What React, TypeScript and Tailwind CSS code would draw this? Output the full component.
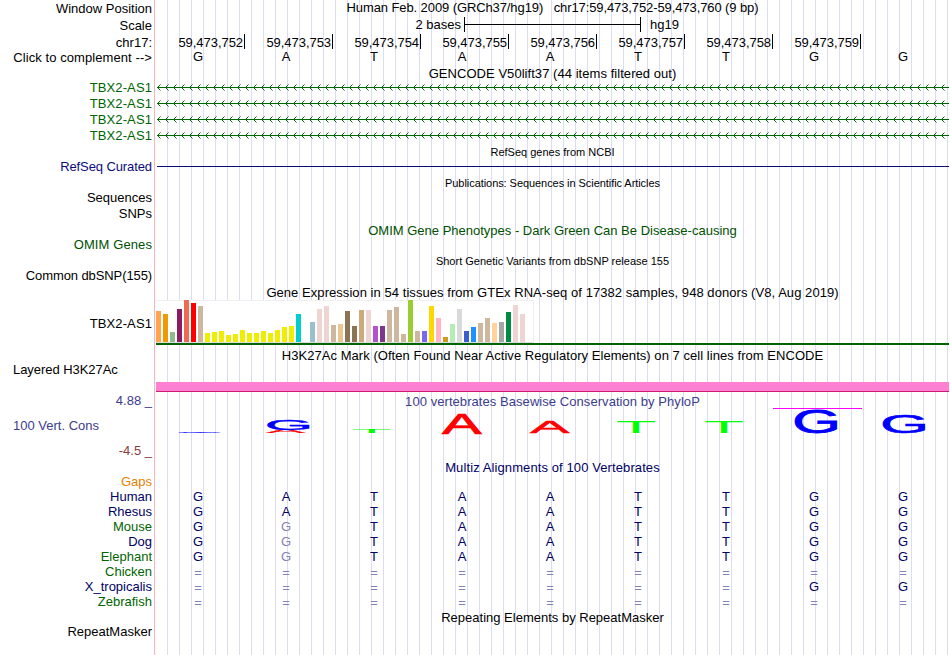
import React from 'react'
import clsx from 'clsx'

const GREEN = 'text-[#006400]'
const NAVY = 'text-[#000064]'

const labels = [
  { text: 'Window Position', cls: 'mt-px' },
  { text: 'Scale', cls: 'mt-0.5' },
  { text: 'chr17:', cls: 'mt-0.5' },
  { text: 'Click to complement -->', cls: 'tracking-[0.08px]' },
  { text: 'TBX2-AS1', cls: 'mt-[15px] text-[#006400] tracking-[0.1px]' },
  { text: 'TBX2-AS1', cls: 'mt-px text-[#006400] tracking-[0.1px]' },
  { text: 'TBX2-AS1', cls: 'mt-px text-[#006400] tracking-[0.1px]' },
  { text: 'TBX2-AS1', cls: 'mt-px text-[#006400] tracking-[0.1px]' },
  { text: 'RefSeq Curated', cls: 'mt-4 text-[#0c0c78] tracking-[-0.1px]' },
  { text: 'Sequences', cls: 'mt-4' },
  { text: 'SNPs', cls: 'mt-px' },
  { text: 'OMIM Genes', cls: 'mt-4 text-[#005000] tracking-[0.1px]' },
  { text: 'Common dbSNP(155)', cls: 'mt-4 tracking-[-0.1px]' },
  { text: 'TBX2-AS1', cls: 'mt-[33px] tracking-[0.1px]' },
  { text: 'Layered H3K27Ac', cls: 'mt-[31px] self-start ml-[13px] tracking-[-0.05px]' },
  { text: '4.88 _', cls: 'mt-4 text-[#3c3c8c]' },
  { text: '100 Vert. Cons', cls: 'mt-2.5 self-start ml-[13px] text-[#3c3c8c]' },
  { text: '-4.5 _', cls: 'mt-2.5 text-[#8c3c3c]' },
  { text: 'Gaps', cls: 'mt-4 text-[#e68200]' },
]

const species = [
  { name: 'Human', color: NAVY, seq: 'GATAATTGG' },
  { name: 'Rhesus', color: NAVY, seq: 'GATAATTGG' },
  { name: 'Mouse', color: GREEN, seq: 'GgTAATTGG' },
  { name: 'Dog', color: NAVY, seq: 'GgTAATTGG' },
  { name: 'Elephant', color: GREEN, seq: 'GgTAATTGG' },
  { name: 'Chicken', color: GREEN, seq: '=========' },
  { name: 'X_tropicalis', color: NAVY, seq: '=======GG' },
  { name: 'Zebrafish', color: GREEN, seq: '=========' },
]

const positions = [752, 753, 754, 755, 756, 757, 758, 759]

// [height, color] per tissue
const tissues: [number, string][] = [
  [31, '#ffa54f'], [28, '#ee9a00'], [10, '#8fbc8f'], [33, '#8b1c62'], [42, '#ee6a50'], [39, '#ff0000'],
  [36, '#cdb79e'], [9, '#eeee00'], [10, '#eeee00'], [11, '#eeee00'], [7, '#eeee00'], [8, '#eeee00'],
  [12, '#eeee00'], [9, '#eeee00'], [9, '#eeee00'], [11, '#eeee00'], [9, '#eeee00'], [12, '#eeee00'],
  [15, '#eeee00'], [16, '#eeee00'], [28, '#00cdcd'], [0, '#ee82ee'], [20, '#9ac0cd'], [33, '#eed5d2'],
  [36, '#eed5d2'], [17, '#cdb79e'], [18, '#eec591'], [31, '#8b7355'], [16, '#8b7355'], [32, '#cdaa7d'],
  [32, '#eed5d2'], [16, '#b452cd'], [16, '#7a378b'], [32, '#cdb79e'], [35, '#cdb79e'], [8, '#cdb79e'],
  [42, '#9acd32'], [11, '#cdb79e'], [11, '#7a67ee'], [36, '#ffd700'], [24, '#ffb6c1'], [5, '#cd9b1d'],
  [18, '#b4eeb4'], [33, '#d9d9d9'], [11, '#3a5fcd'], [15, '#1e90ff'], [19, '#cdb79e'], [24, '#cdb79e'],
  [19, '#ffd39b'], [20, '#a6a6a6'], [30, '#008b45'], [37, '#eed5d2'], [28, '#eed5d2'], [0, '#ff00ff'],
]

// logo letters: left, right, top, bottom inside the conservation track
const logo = [
  { c: 'G', x0: 22.3, x1: 65, y0: 23, y1: 24.8 },
  { c: 'A', x0: 109.5, x1: 150, y0: 21.5, y1: 25 },
  { c: 'G', x0: 111, x1: 154, y0: 11, y1: 22 },
  { c: 'T', x0: 197.3, x1: 234.7, y0: 21, y1: 25 },
  { c: 'A', x0: 285.5, x1: 326, y0: 5, y1: 26 },
  { c: 'A', x0: 373.5, x1: 414, y0: 13, y1: 25 },
  { c: 'T', x0: 461.3, x1: 499, y0: 14, y1: 25 },
  { c: 'T', x0: 549.3, x1: 587, y0: 13, y1: 25 },
  { c: 'G', x0: 638.7, x1: 682, y0: 2, y1: 26 },
  { c: 'G', x0: 726.7, x1: 770, y0: 7, y1: 25.5 },
]

// ink boxes of the glyphs at font-size 100, outline included
const ink: Record<string, { l: number; r: number; t: number; b: number; fill: string; stroke: number }> = {
  A: { l: -0.8, r: 67.5, t: 70, b: -1.2, fill: '#ff0000', stroke: 2.4 },
  G: { l: 3.8, r: 73, t: 71, b: -2.2, fill: '#0000ff', stroke: 2.4 },
  T: { l: 2.2, r: 58.9, t: 68.8, b: 0, fill: '#00ff00', stroke: 0 },
}

function Title({ children, className }: { children: React.ReactNode; className?: string }) {
  return <div className={clsx('h-[15px] leading-[15px] text-center whitespace-pre', className)}>{children}</div>
}

function Bases({ seq, className }: { seq: string; className?: string }) {
  return (
    <div className={clsx('h-[15px] grid grid-cols-9 -ml-0.5 w-[792px] leading-[15px] text-center', className)}>
      {seq.split('').map((b, i) => (
        <span key={i} className={clsx('last:pl-0.5', (b === 'g' || b === '=') && 'text-[#8282b4]', b === '=' && 'pt-px')}>
          {b.toUpperCase()}
        </span>
      ))}
    </div>
  )
}

function GeneLine() {
  return (
    <svg className="block h-4 w-[793px]" viewBox="0 0 793 16" shapeRendering="crispEdges">
      <rect x="1" y="7" width="792" height="1" fill="#006400" />
      {Array.from({ length: 99 }, (_, i) => (
        <g key={i} transform={`translate(${i * 8 + 1} 4)`} fill="#006400">
          <rect x="1" y="2" width="1" height="1" />
          <rect x="2" y="1" width="1" height="1" />
          <rect x="3" y="0" width="1" height="1" opacity="0.5" />
          <rect x="1" y="4" width="1" height="1" />
          <rect x="2" y="5" width="1" height="1" />
          <rect x="3" y="6" width="1" height="1" opacity="0.5" />
        </g>
      ))}
    </svg>
  )
}

function ExpressionChart() {
  return (
    <div className="h-[45px] border-b-2 border-[#006400]">
      <div className="h-[43px] w-[378px] bg-white border-t border-r border-[#f0f0f0]">
        <div className="-mt-px flex h-[42px] items-end gap-0.5">
          {tissues.map(([h, color], i) => (
            <div key={i} className="w-[5px]" style={{ height: h, backgroundColor: color }} />
          ))}
        </div>
        <div className="h-px bg-[#dcdcdc]" />
      </div>
    </div>
  )
}

function Conservation() {
  return (
    <svg className="block h-[52px] w-[793px] overflow-visible" viewBox="0 0 793 52">
      <rect x="617" y="0" width="89" height="1" fill="#ff00ff" />
      {logo.map((l, i) => {
        const g = ink[l.c]
        const sx = (l.x1 - l.x0) / (g.r - g.l)
        const sy = (l.y1 - l.y0) / (g.t - g.b)
        return (
          <text
            key={i}
            fontSize="100"
            fill={g.fill}
            stroke={g.fill}
            strokeWidth={g.stroke}
            transform={`translate(${l.x0 - g.l * sx} ${l.y1 + g.b * sy}) scale(${sx} ${sy})`}
          >
            {l.c}
          </text>
        )
      })}
    </svg>
  )
}

export default function App() {
  return (
    <div className="flex h-[655px] w-[950px] overflow-hidden bg-white font-['Liberation_Sans',Arial,sans-serif] text-[13px] leading-[15px] text-black">
      {/* Track labels */}
      <div className="flex w-[155px] shrink-0 flex-col items-end border-r border-[#ffb4b4] pr-0.5 whitespace-pre">
        {labels.map((l, i) => (
          <div key={i} className={clsx('h-[15px]', l.cls)}>{l.text}</div>
        ))}
        {species.map(s => (
          <div key={s.name} className={clsx('h-[15px]', s.color)}>{s.name}</div>
        ))}
        <div className="mt-[15px] h-[15px]">RepeatMasker</div>
      </div>

      {/* Tracks over the guide lines */}
      <div className="ml-px w-[793px] bg-[linear-gradient(to_right,transparent_11px,#dcdcf5_11px)] bg-[length:12px_1px]">
        <Title className="tracking-[-0.1px]">{'Human Feb. 2009 (GRCh37/hg19)   chr17:59,473,752-59,473,760 (9 bp)'}</Title>
        <div className="mt-0.5 flex h-[15px] items-center">
          <span className="w-[305px] text-right">2 bases</span>
          <div className="ml-[3px] flex h-[15px] w-[177px] items-center border-x border-black">
            <div className="h-px w-full bg-black" />
          </div>
          <span className="ml-[9px]">hg19</span>
        </div>
        <div className="mt-0.5 ml-px flex h-[15px]">
          {positions.map(p => (
            <div key={p} className="h-[15px] w-[88px] border-r border-black pr-px pt-px text-right tracking-[-0.05px]">59,473,{p}</div>
          ))}
        </div>
        <Bases seq="GATAATTGG" />
        <Title className="mt-0.5 tracking-[0.05px]">GENCODE V50lift37 (44 items filtered out)</Title>
        <div className="-mt-px">
          <GeneLine />
          <GeneLine />
          <GeneLine />
          <GeneLine />
        </div>
        <Title className="mt-px text-[11px]">RefSeq genes from NCBI</Title>
        <div className="mt-1.5 ml-px h-px bg-[#0c0c78]" />
        <Title className="mt-[9px] text-[11px] tracking-[-0.06px]">Publications: Sequences in Scientific Articles</Title>
        <Title className="mt-8 text-[#005000]">OMIM Gene Phenotypes - Dark Green Can Be Disease-causing</Title>
        <Title className="mt-4 text-[11px]">Short Genetic Variants from dbSNP release 155</Title>
        <Title className="mt-4 tracking-[0.055px]">Gene Expression in 54 tissues from GTEx RNA-seq of 17382 samples, 948 donors (V8, Aug 2019)</Title>
        <ExpressionChart />
        <Title className="mt-[3px] tracking-[0.045px]">H3K27Ac Mark (Often Found Near Active Regulatory Elements) on 7 cell lines from ENCODE</Title>
        <div className="mt-[19px] h-2.5 border-b border-[#d01c6c] bg-[#ff80d2]" />
        <Title className="mt-0.5 tracking-[0.06px] text-[#3c3c8c]">100 vertebrates Basewise Conservation by PhyloP</Title>
        <div className="-mt-px">
          <Conservation />
        </div>
        <Title className={clsx('tracking-[0.1px]', NAVY)}>Multiz Alignments of 100 Vertebrates</Title>
        <div className={clsx('mt-3.5', NAVY)}>
          {species.map(s => (
            <Bases key={s.name} seq={s.seq} />
          ))}
        </div>
        <Title className="mt-px">Repeating Elements by RepeatMasker</Title>
      </div>
    </div>
  )
}
